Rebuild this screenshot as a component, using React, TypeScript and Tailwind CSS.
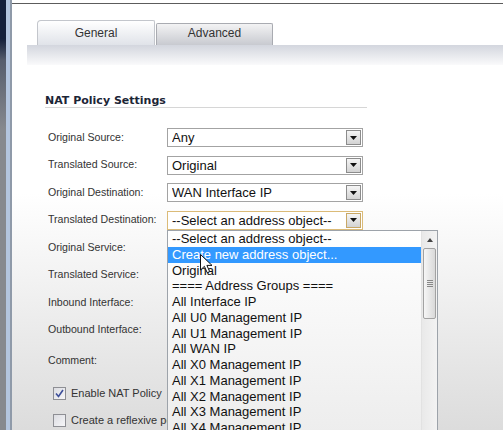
import React from "react";

const rows = [
  { label: "Original Source:", value: "Any" },
  { label: "Translated Source:", value: "Original" },
  { label: "Original Destination:", value: "WAN Interface IP" },
  { label: "Translated Destination:", value: "--Select an address object--", focus: true },
  { label: "Original Service:" },
  { label: "Translated Service:" },
  { label: "Inbound Interface:" },
  { label: "Outbound Interface:" },
];

const options = [
  "--Select an address object--",
  "Create new address object...",
  "Original",
  "==== Address Groups ====",
  "All Interface IP",
  "All U0 Management IP",
  "All U1 Management IP",
  "All WAN IP",
  "All X0 Management IP",
  "All X1 Management IP",
  "All X2 Management IP",
  "All X3 Management IP",
  "All X4 Management IP",
];

const Select = ({ value, focus }: { value: string; focus?: boolean }) => (
  <div
    className={`flex h-[19px] w-[196px] items-center border bg-white pl-[4px] pr-[1px] ${
      focus ? "border-[#dbbb78]" : "border-[#a3a3a3]"
    }`}
  >
    <span className="flex-1 truncate text-[13px] leading-[17px] text-[#111]">{value}</span>
    <div
      className={`flex h-[15px] w-[15px] items-center justify-center border bg-linear-to-b from-[#f5f5f5] to-[#d3d3d3] ${
        focus ? "border-[#c9a866]" : "border-[#8c8c8c]"
      }`}
    >
      <svg width="7" height="4" viewBox="0 0 7 4">
        <path d="M0 0 H7 L3.5 4 Z" fill="#111" />
      </svg>
    </div>
  </div>
);

const Checkbox = ({ checked }: { checked?: boolean }) => (
  <div className="flex h-[13px] w-[13px] items-center justify-center border border-[#8e8f94] bg-linear-to-br from-[#dcdde2] to-[#f6f6f8]">
    {checked && (
      <svg width="9" height="9" viewBox="0 0 9 9">
        <path d="M1 4.5 L3.5 7.5 L8 1" fill="none" stroke="#3d4f9a" strokeWidth="1.6" />
      </svg>
    )}
  </div>
);

export default function App() {
  return (
    <div className="relative flex h-[430px] w-[503px] overflow-hidden bg-white font-['Liberation_Sans',Arial,sans-serif]">
      {/* window frame on the left */}
      <div className="flex w-[12px] shrink-0">
        <div className="w-[6px] bg-linear-to-b from-[#14203b] from-[9%] via-[#565d6c] via-[14%] to-[#86898f] to-[30%]" />
        <div className="w-[4px] bg-[#b3c5df]" />
        <div className="w-[2px] bg-[#8f9aa9]" />
      </div>

      <div className="relative flex flex-1 flex-col bg-linear-to-b from-white from-45% to-[#dcdcdc]">
        <div className="h-[4px] shrink-0 border-b border-[#5c5c5c] bg-white" />

        {/* tabs */}
        <div className="flex h-[41px] shrink-0 items-end pl-[25px]">
          <div className="flex h-[25px] w-[118px] items-center justify-center rounded-tl-[4px] rounded-tr-[2px] border-l border-r border-t border-[#c3c6cc] bg-linear-to-b from-white to-[#e0e3e9] text-[12px] text-[#333]">
            General
          </div>
          <div className="ml-[1px] flex h-[22px] w-[117px] items-center justify-center rounded-t-[2px] border-l border-r border-t border-[#a9abb1] bg-linear-to-b from-[#f3f3f4] to-[#c8cad0] pb-[3px] text-[12px] text-[#333]">
            Advanced
          </div>
        </div>
        <div className="ml-[15px] h-[20px] shrink-0 bg-linear-to-b from-[#d3d6de] to-[#fafafb]" />

        {/* form */}
        <div className="shrink-0 pt-[29px]">
          <div className="ml-[33px] w-[322px] border-b border-[#d6d6d6] font-['DejaVu_Sans',sans-serif] text-[11px] font-bold leading-[13px] text-[#1c2536]">
            NAT Policy Settings
          </div>
          <div className="mt-[15.75px]">
            {rows.map((r) => (
              <div key={r.label} className="flex h-[27.5px] items-center pl-[36px]">
                <span className="w-[119px] text-[10.6px] text-[#333]">{r.label}</span>
                {r.value && <Select value={r.value} focus={r.focus} />}
              </div>
            ))}
            <div className="flex h-[34px] items-center pl-[36px]">
              <span className="text-[10.6px] text-[#333]">Comment:</span>
            </div>
            <div className="flex h-[30.5px] items-center gap-[5px] pl-[41px]">
              <Checkbox checked />
              <span className="text-[11px] text-[#333]">Enable NAT Policy</span>
            </div>
            <div className="flex h-[24px] items-center gap-[5px] pl-[41px]">
              <Checkbox />
              <span className="text-[11px] text-[#333]">Create a reflexive policy</span>
            </div>
          </div>
        </div>

        {/* open dropdown list */}
        <div className="absolute left-[155px] top-[230px] flex h-[215px] w-[271px] border border-[#9da3aa] bg-linear-to-b from-white to-[#ececec]">
          <div className="flex-1">
            {options.map((o, i) => (
              <div
                key={o}
                className={`h-[15.75px] whitespace-nowrap pl-[4px] text-[13px] leading-[15.75px] ${
                  i === 1 ? "bg-[#3399ff] text-white" : "text-[#111]"
                }`}
              >
                {o}
              </div>
            ))}
          </div>
          <div className="flex w-[16px] flex-col items-center border-l border-[#e2e2e2] bg-linear-to-r from-[#e9e9e9] to-[#f3f3f3]">
            <div className="flex h-[17px] items-center justify-center">
              <svg width="6" height="4" viewBox="0 0 6 4">
                <path d="M0 4 H6 L3 0 Z" fill="#444" />
              </svg>
            </div>
            <div className="flex h-[71px] w-[13px] items-center justify-center rounded-[2px] border border-[#a2a2a2] bg-linear-to-r from-[#f6f6f6] to-[#d9d9d9]">
              <div className="flex flex-col gap-[1px]">
                <div className="h-[1px] w-[6px] bg-[#888]" />
                <div className="h-[1px] w-[6px] bg-[#888]" />
                <div className="h-[1px] w-[6px] bg-[#888]" />
                <div className="h-[1px] w-[6px] bg-[#888]" />
              </div>
            </div>
          </div>
        </div>

        {/* mouse pointer */}
        <svg className="absolute left-[188px] top-[254px]" width="13" height="20" viewBox="0 0 13 20">
          <path
            d="M0.5 0.5 L0.5 16 L4.4 12.3 L7.2 18.7 L9.7 17.6 L6.9 11.4 L12 11.4 Z"
            fill="white"
            stroke="#111"
            strokeWidth="1"
          />
        </svg>
      </div>
    </div>
  );
}
